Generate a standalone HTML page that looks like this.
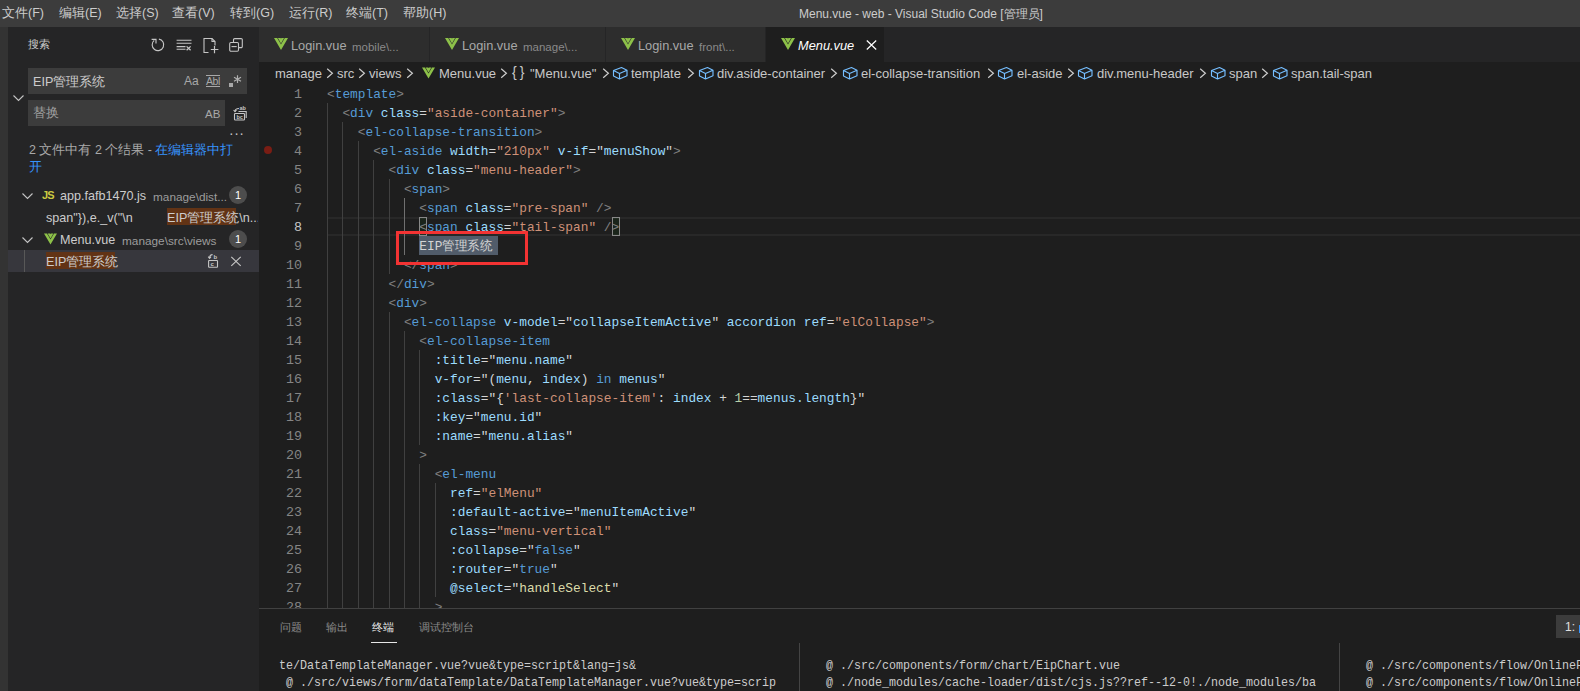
<!DOCTYPE html>
<html><head><meta charset="utf-8">
<style>
*{margin:0;padding:0;box-sizing:border-box}
html,body{width:1580px;height:691px;overflow:hidden;background:#1e1e1e;font-family:"Liberation Sans",sans-serif;color:#cccccc}
.a{position:absolute;white-space:nowrap}
#title{position:absolute;left:0;top:0;width:1580px;height:27px;background:#3c3c3c}
#title .m{position:absolute;top:5px;font-size:12.5px;color:#cccccc;line-height:16px}
#act{position:absolute;left:0;top:27px;width:8px;height:664px;background:#333333}
#side{position:absolute;left:8px;top:27px;width:251px;height:664px;background:#252526;overflow:hidden}
#tabs{position:absolute;left:259px;top:27px;width:1321px;height:35px;background:#252526}
.tab{position:absolute;top:0;height:35px;background:#2d2d2d;border-right:1px solid #252526}
.tab.act{background:#1e1e1e}
.tl{position:absolute;top:11px;font-size:12.8px;line-height:16px;color:#a8a8a8}
.td{position:absolute;top:12px;font-size:11.5px;line-height:16px;color:#8a8a8a}
#crumb{position:absolute;left:259px;top:62px;width:1321px;height:22px;background:#1e1e1e}
.cb{position:absolute;top:4px;font-size:13px;line-height:16px;color:#c8c8c8}
#code{position:absolute;left:259px;top:84px;width:1321px;height:524px;overflow:hidden}
.ln{position:absolute;left:0;margin-top:1px;width:43px;text-align:right;font-family:"Liberation Mono",monospace;font-size:13.333px;line-height:19px;color:#858585}
.cl{position:absolute;left:68px;margin-top:1px;font-family:"Liberation Mono",monospace;font-size:13.333px;line-height:19px;color:#d4d4d4;white-space:pre;transform:scaleX(0.96125);transform-origin:0 0}
.t{color:#569cd6}.p{color:#808080}.n{color:#9cdcfe}.s{color:#ce9178}.f{color:#dcdcaa}.num{color:#b5cea8}
#panel{position:absolute;left:259px;top:608px;width:1321px;height:83px;background:#1e1e1e;border-top:1px solid #414141}
.pt{position:absolute;top:11px;font-size:11px;line-height:14px;color:#8b8b8b}
.term{position:absolute;margin-top:1px;font-family:"Liberation Mono",monospace;font-size:13.333px;transform:scaleX(0.875);transform-origin:0 0;line-height:17px;color:#cccccc;white-space:pre}
</style></head><body>
<div id="title">
  <span class="m" style="left:2px">文件(F)</span>
  <span class="m" style="left:59px">编辑(E)</span>
  <span class="m" style="left:116px">选择(S)</span>
  <span class="m" style="left:172px">查看(V)</span>
  <span class="m" style="left:230px">转到(G)</span>
  <span class="m" style="left:289px">运行(R)</span>
  <span class="m" style="left:346px">终端(T)</span>
  <span class="m" style="left:403px">帮助(H)</span>
  <span class="m" style="left:799px;font-size:12px;top:6px">Menu.vue - web - Visual Studio Code [管理员]</span>
</div>
<div id="act"></div>
<div id="side">
<span class="a" style="left:20px;top:10px;font-size:11px;line-height:15px;color:#cccccc">搜索</span>
<svg class="a" style="left:141px;top:9px" width="18" height="18" viewBox="0 0 18 18" fill="none" stroke="#c5c5c5" stroke-width="1.15"><path d="M9.9 3.1A5.8 5.8 0 1 1 5.2 4.4"/><path d="M2.6 3.4H7V7.4"/></svg>
<svg class="a" style="left:167px;top:9px" width="18" height="18" viewBox="0 0 18 18" fill="none" stroke="#c5c5c5" stroke-width="1.1"><path d="M1.6 4.3H16.5M1.6 7.3H16.5M1.6 10.6H10.5M1.6 13.3H10.5"/><path d="M11.6 10.4L15.6 14.2M15.6 10.4L11.6 14.2" stroke-width="1.3"/></svg>
<svg class="a" style="left:194px;top:9px" width="18" height="18" viewBox="0 0 18 18" fill="none" stroke="#c5c5c5" stroke-width="1.1"><path d="M6.5 16.5H2V2.5H10L13 5.5V9.5"/><path d="M10 2.5V5.5H13"/><path d="M12.5 10V17.2M8.8 13.5H16.4" stroke-width="1.2"/></svg>
<svg class="a" style="left:220px;top:9px" width="16" height="18" viewBox="0 0 16 18" fill="none" stroke="#c5c5c5" stroke-width="1.1"><path d="M5.5 6.5V3.8A1.2 1.2 0 0 1 6.7 2.6H13.1A1.2 1.2 0 0 1 14.3 3.8V10.4A1.2 1.2 0 0 1 13.1 11.6H10.5"/><rect x="1.7" y="6.5" width="8.8" height="8.8" rx="1.2"/><path d="M3.5 10.6H8.7"/></svg>
<div class="a" style="left:20px;top:41px;width:219px;height:26px;background:#3c3c3c"></div>
<span class="a" style="left:25px;top:47px;font-size:12.6px;line-height:16px;color:#cccccc">EIP管理系统</span>
<span class="a" style="left:176px;top:47px;font-size:12px;line-height:14px;color:#a8a8a8">Aa</span>
<div class="a" style="left:198px;top:48px;width:14px;height:1px;background:#a8a8a8"></div><div class="a" style="left:198px;top:59px;width:14px;height:1px;background:#a8a8a8"></div><span class="a" style="left:198px;top:49px;font-size:10.5px;line-height:10px;color:#a8a8a8;letter-spacing:-0.4px">Abl</span>
<div class="a" style="left:221px;top:56px;width:4px;height:4px;background:#a8a8a8"></div>
<svg class="a" style="left:225px;top:48px" width="9" height="9" viewBox="0 0 9 9" stroke="#b0b0b0" stroke-width="1.2" fill="none"><path d="M4.5 0.3V8.1M1 2.3L8 6.2M8 2.3L1 6.2"/></svg>
<svg class="a" style="left:5px;top:67px" width="11" height="8" viewBox="0 0 11 8" fill="none" stroke="#c5c5c5" stroke-width="1.1"><path d="M0.5 1.5L5.5 6.5L10.5 1.5"/></svg>
<div class="a" style="left:20px;top:73px;width:197px;height:26px;background:#3c3c3c"></div>
<span class="a" style="left:25px;top:78px;font-size:13px;line-height:16px;color:#a0a0a0">替换</span>
<span class="a" style="left:197px;top:80px;font-size:11.5px;line-height:14px;color:#a8a8a8">AB</span>
<svg class="a" style="left:224px;top:75px" width="17" height="19" viewBox="0 0 17 19" fill="none" stroke="#c5c5c5" stroke-width="1.1"><rect x="2.5" y="11.5" width="10" height="6.5" rx="0.8"/><path d="M6.5 9.5H14.2V16"/><path d="M3 9.5C3 7.5 4.5 6.5 7 6.5" /><path d="M1.6 8L3 9.7L4.5 8"/><text x="7.5" y="8" font-size="5.5" fill="#c5c5c5" stroke="none" font-family="Liberation Sans" font-weight="bold">ab</text><text x="4.5" y="16.6" font-size="5.5" fill="#c5c5c5" stroke="none" font-family="Liberation Sans" font-weight="bold">bc</text></svg>
<span class="a" style="left:221px;top:99px;font-size:14px;line-height:14px;color:#c5c5c5;letter-spacing:0.5px">&middot;&middot;&middot;</span>
<div class="a" style="left:21px;top:115px;width:222px;font-size:12.5px;line-height:17px;color:#a9a9a9;white-space:normal">2 文件中有 2 个结果 - <span style="color:#3794ff">在编辑器中打<br>开</span></div>
<svg class="a" style="left:14px;top:165px" width="11" height="8" viewBox="0 0 11 8" fill="none" stroke="#c5c5c5" stroke-width="1.1"><path d="M0.5 1.5L5.5 6.5L10.5 1.5"/></svg>
<span class="a" style="left:34px;top:162px;font-size:11px;line-height:12px;font-weight:bold;color:#cbcb41;letter-spacing:-0.8px">JS</span>
<span class="a" style="left:52px;top:161px;font-size:12.6px;line-height:16px;color:#cccccc">app.fafb1470.js</span>
<span class="a" style="left:145px;top:162px;font-size:11.8px;line-height:16px;color:#9d9d9d">manage\dist...</span>
<div class="a" style="left:221px;top:159px;width:18px;height:18px;border-radius:50%;background:#4d4d4d;color:#ffffff;font-size:11px;line-height:18px;text-align:center">1</div>
<span class="a" style="left:38px;top:183px;font-size:12.6px;line-height:16px;color:#cccccc">span&quot;}),e._v(&quot;\n</span>
<div class="a" style="left:159px;top:181px;width:69px;height:17px;background:#623315"></div>
<span class="a" style="left:159px;top:183px;width:91px;overflow:hidden;font-size:12.6px;line-height:16px;color:#cccccc">EIP管理系统\n...</span>
<svg class="a" style="left:14px;top:209px" width="11" height="8" viewBox="0 0 11 8" fill="none" stroke="#c5c5c5" stroke-width="1.1"><path d="M0.5 1.5L5.5 6.5L10.5 1.5"/></svg>
<svg class="a" style="left:36px;top:206px" width="13" height="12" viewBox="0 0 14 12"><path d="M0 0H3.2L7 6.5L10.8 0H14L7 12Z M3.9 0H6.6L7 0.8L7.4 0H10.1L7 5.4Z" fill="#8dc149"/></svg>
<span class="a" style="left:52px;top:205px;font-size:12.6px;line-height:16px;color:#cccccc">Menu.vue</span>
<span class="a" style="left:114px;top:206px;font-size:11.8px;line-height:16px;color:#9d9d9d">manage\src\views</span>
<div class="a" style="left:221px;top:203px;width:18px;height:18px;border-radius:50%;background:#4d4d4d;color:#ffffff;font-size:11px;line-height:18px;text-align:center">1</div>
<div class="a" style="left:0;top:223px;width:251px;height:22px;background:#37373d"></div>
<div class="a" style="left:16px;top:223px;width:1px;height:22px;background:#585858"></div>
<div class="a" style="left:38px;top:225px;width:69px;height:17px;background:#623315"></div>
<span class="a" style="left:38px;top:227px;font-size:12.6px;line-height:16px;color:#cccccc">EIP管理系统</span>
<svg class="a" style="left:198px;top:224px" width="14" height="18" viewBox="0 0 14 18" fill="none" stroke="#c5c5c5" stroke-width="1.1"><rect x="2.6" y="9.5" width="8.9" height="6.8" rx="0.5"/><path d="M3.6 7C3.6 4.6 4.6 3.6 6.6 3.6"/><path d="M2.2 5.6L3.6 7.4L5 5.6"/><text x="7.6" y="7.6" font-size="6" fill="#c5c5c5" stroke="none" font-family="Liberation Sans" font-weight="bold">b</text><text x="4.4" y="15" font-size="6" fill="#c5c5c5" stroke="none" font-family="Liberation Sans" font-weight="bold">c</text></svg>
<svg class="a" style="left:222px;top:229px" width="12" height="11" viewBox="0 0 12 11" fill="none" stroke="#c5c5c5" stroke-width="1.15"><path d="M1.3 0.9L10.7 9.9M10.7 0.9L1.3 9.9"/></svg>
</div>
<div id="tabs">
 <div class="tab" style="left:0;width:171px"><svg class="a" style="left:15px;top:11px" width="14" height="12" viewBox="0 0 14 12"><path d="M0 0H3.2L7 6.5L10.8 0H14L7 12Z M3.9 0H6.6L7 0.8L7.4 0H10.1L7 5.4Z" fill="#8dc149"/></svg><span class="tl" style="left:32px">Login.vue</span><span class="td" style="left:93px">mobile\...</span></div>
 <div class="tab" style="left:171px;width:176px"><svg class="a" style="left:15px;top:11px" width="14" height="12" viewBox="0 0 14 12"><path d="M0 0H3.2L7 6.5L10.8 0H14L7 12Z M3.9 0H6.6L7 0.8L7.4 0H10.1L7 5.4Z" fill="#8dc149"/></svg><span class="tl" style="left:32px">Login.vue</span><span class="td" style="left:93px">manage\...</span></div>
 <div class="tab" style="left:347px;width:160px"><svg class="a" style="left:15px;top:11px" width="14" height="12" viewBox="0 0 14 12"><path d="M0 0H3.2L7 6.5L10.8 0H14L7 12Z M3.9 0H6.6L7 0.8L7.4 0H10.1L7 5.4Z" fill="#8dc149"/></svg><span class="tl" style="left:32px">Login.vue</span><span class="td" style="left:93px">front\...</span></div>
 <div class="tab act" style="left:507px;width:119px"><svg class="a" style="left:15px;top:11px" width="14" height="12" viewBox="0 0 14 12"><path d="M0 0H3.2L7 6.5L10.8 0H14L7 12Z M3.9 0H6.6L7 0.8L7.4 0H10.1L7 5.4Z" fill="#8dc149"/></svg><span class="tl" style="left:32px;color:#ffffff;font-style:italic">Menu.vue</span><svg class="a" style="left:100px;top:13px" width="11" height="10" viewBox="0 0 11 10" fill="none" stroke="#ffffff" stroke-width="1.2"><path d="M0.8 0.5L10.2 9.5M10.2 0.5L0.8 9.5"/></svg></div>
</div>
<div id="crumb"><span class="cb" style="left:16px">manage</span><svg class="a" style="left:67px;top:5.5px" width="8" height="11" viewBox="0 0 8 11" fill="none" stroke="#cccccc" stroke-width="1.2"><path d="M1.2 0.8L6.4 5.3L1.2 9.8"/></svg><span class="cb" style="left:78px">src</span><svg class="a" style="left:99px;top:5.5px" width="8" height="11" viewBox="0 0 8 11" fill="none" stroke="#cccccc" stroke-width="1.2"><path d="M1.2 0.8L6.4 5.3L1.2 9.8"/></svg><span class="cb" style="left:110px">views</span><svg class="a" style="left:147px;top:5.5px" width="8" height="11" viewBox="0 0 8 11" fill="none" stroke="#cccccc" stroke-width="1.2"><path d="M1.2 0.8L6.4 5.3L1.2 9.8"/></svg><svg class="a" style="left:163px;top:5px" width="13" height="12" viewBox="0 0 14 12"><path d="M0 0H3.2L7 6.5L10.8 0H14L7 12Z M3.9 0H6.6L7 0.8L7.4 0H10.1L7 5.4Z" fill="#8dc149"/></svg><span class="cb" style="left:180px">Menu.vue</span><svg class="a" style="left:241px;top:5.5px" width="8" height="11" viewBox="0 0 8 11" fill="none" stroke="#cccccc" stroke-width="1.2"><path d="M1.2 0.8L6.4 5.3L1.2 9.8"/></svg><span class="cb" style="left:253px;top:2px;font-size:14px;letter-spacing:3px">{}</span><span class="cb" style="left:271px">&quot;Menu.vue&quot;</span><svg class="a" style="left:343px;top:5.5px" width="8" height="11" viewBox="0 0 8 11" fill="none" stroke="#cccccc" stroke-width="1.2"><path d="M1.2 0.8L6.4 5.3L1.2 9.8"/></svg><svg class="a" style="left:352px;top:3px" width="17" height="16" viewBox="0 0 17 16"><path d="M10.5 2.5L2.5 5.5V11L8.5 14L16 10.8V5.3Z M2.5 5.5L8.5 8.5L16 5.3 M8.5 8.5V14" fill="none" stroke="#75beff" stroke-width="1.15" stroke-linejoin="round"/></svg><span class="cb" style="left:372px">template</span><svg class="a" style="left:428px;top:5.5px" width="8" height="11" viewBox="0 0 8 11" fill="none" stroke="#cccccc" stroke-width="1.2"><path d="M1.2 0.8L6.4 5.3L1.2 9.8"/></svg><svg class="a" style="left:438px;top:3px" width="17" height="16" viewBox="0 0 17 16"><path d="M10.5 2.5L2.5 5.5V11L8.5 14L16 10.8V5.3Z M2.5 5.5L8.5 8.5L16 5.3 M8.5 8.5V14" fill="none" stroke="#75beff" stroke-width="1.15" stroke-linejoin="round"/></svg><span class="cb" style="left:458px">div.aside-container</span><svg class="a" style="left:571px;top:5.5px" width="8" height="11" viewBox="0 0 8 11" fill="none" stroke="#cccccc" stroke-width="1.2"><path d="M1.2 0.8L6.4 5.3L1.2 9.8"/></svg><svg class="a" style="left:582px;top:3px" width="17" height="16" viewBox="0 0 17 16"><path d="M10.5 2.5L2.5 5.5V11L8.5 14L16 10.8V5.3Z M2.5 5.5L8.5 8.5L16 5.3 M8.5 8.5V14" fill="none" stroke="#75beff" stroke-width="1.15" stroke-linejoin="round"/></svg><span class="cb" style="left:602px">el-collapse-transition</span><svg class="a" style="left:728px;top:5.5px" width="8" height="11" viewBox="0 0 8 11" fill="none" stroke="#cccccc" stroke-width="1.2"><path d="M1.2 0.8L6.4 5.3L1.2 9.8"/></svg><svg class="a" style="left:737px;top:3px" width="17" height="16" viewBox="0 0 17 16"><path d="M10.5 2.5L2.5 5.5V11L8.5 14L16 10.8V5.3Z M2.5 5.5L8.5 8.5L16 5.3 M8.5 8.5V14" fill="none" stroke="#75beff" stroke-width="1.15" stroke-linejoin="round"/></svg><span class="cb" style="left:758px">el-aside</span><svg class="a" style="left:808px;top:5.5px" width="8" height="11" viewBox="0 0 8 11" fill="none" stroke="#cccccc" stroke-width="1.2"><path d="M1.2 0.8L6.4 5.3L1.2 9.8"/></svg><svg class="a" style="left:817px;top:3px" width="17" height="16" viewBox="0 0 17 16"><path d="M10.5 2.5L2.5 5.5V11L8.5 14L16 10.8V5.3Z M2.5 5.5L8.5 8.5L16 5.3 M8.5 8.5V14" fill="none" stroke="#75beff" stroke-width="1.15" stroke-linejoin="round"/></svg><span class="cb" style="left:838px">div.menu-header</span><svg class="a" style="left:940px;top:5.5px" width="8" height="11" viewBox="0 0 8 11" fill="none" stroke="#cccccc" stroke-width="1.2"><path d="M1.2 0.8L6.4 5.3L1.2 9.8"/></svg><svg class="a" style="left:950px;top:3px" width="17" height="16" viewBox="0 0 17 16"><path d="M10.5 2.5L2.5 5.5V11L8.5 14L16 10.8V5.3Z M2.5 5.5L8.5 8.5L16 5.3 M8.5 8.5V14" fill="none" stroke="#75beff" stroke-width="1.15" stroke-linejoin="round"/></svg><span class="cb" style="left:970px">span</span><svg class="a" style="left:1002px;top:5.5px" width="8" height="11" viewBox="0 0 8 11" fill="none" stroke="#cccccc" stroke-width="1.2"><path d="M1.2 0.8L6.4 5.3L1.2 9.8"/></svg><svg class="a" style="left:1012px;top:3px" width="17" height="16" viewBox="0 0 17 16"><path d="M10.5 2.5L2.5 5.5V11L8.5 14L16 10.8V5.3Z M2.5 5.5L8.5 8.5L16 5.3 M8.5 8.5V14" fill="none" stroke="#75beff" stroke-width="1.15" stroke-linejoin="round"/></svg><span class="cb" style="left:1032px">span.tail-span</span></div>
<div id="code">
<div class="a" style="left:69px;top:133px;width:1252px;height:19px;border-top:2px solid #282828;border-bottom:2px solid #282828"></div>
<div class="a" style="left:68px;top:19px;width:1px;height:513px;background:#404040"></div>
<div class="a" style="left:83px;top:38px;width:1px;height:494px;background:#404040"></div>
<div class="a" style="left:99px;top:57px;width:1px;height:475px;background:#404040"></div>
<div class="a" style="left:114px;top:76px;width:1px;height:456px;background:#404040"></div>
<div class="a" style="left:130px;top:95px;width:1px;height:95px;background:#404040"></div>
<div class="a" style="left:130px;top:228px;width:1px;height:304px;background:#404040"></div>
<div class="a" style="left:145px;top:114px;width:1px;height:57px;background:#707070"></div>
<div class="a" style="left:145px;top:247px;width:1px;height:285px;background:#404040"></div>
<div class="a" style="left:160px;top:266px;width:1px;height:95px;background:#404040"></div>
<div class="a" style="left:160px;top:380px;width:1px;height:152px;background:#404040"></div>
<div class="a" style="left:176px;top:399px;width:1px;height:114px;background:#404040"></div>
<div class="a" style="left:160px;top:133px;width:8px;height:19px;border:1px solid #888888;background:rgba(0,100,0,0.1)"></div>
<div class="a" style="left:353px;top:133px;width:8px;height:19px;border:1px solid #888888;background:rgba(0,100,0,0.1)"></div>
<div class="a" style="left:160px;top:152px;width:79px;height:19px;background:#515c6a"></div>
<div class="a" style="left:5px;top:62px;width:8px;height:8px;border-radius:50%;background:#7a1d14"></div>
<div class="ln" style="top:0px">1</div>
<div class="cl" style="top:0px"><span class="p">&lt;</span><span class="t">template</span><span class="p">&gt;</span></div>
<div class="ln" style="top:19px">2</div>
<div class="cl" style="top:19px">  <span class="p">&lt;</span><span class="t">div</span> <span class="n">class</span>=<span class="s">&quot;aside-container&quot;</span><span class="p">&gt;</span></div>
<div class="ln" style="top:38px">3</div>
<div class="cl" style="top:38px">    <span class="p">&lt;</span><span class="t">el-collapse-transition</span><span class="p">&gt;</span></div>
<div class="ln" style="top:57px">4</div>
<div class="cl" style="top:57px">      <span class="p">&lt;</span><span class="t">el-aside</span> <span class="n">width</span>=<span class="s">&quot;210px&quot;</span> <span class="n">v-if</span>=&quot;<span class="n">menuShow</span>&quot;<span class="p">&gt;</span></div>
<div class="ln" style="top:76px">5</div>
<div class="cl" style="top:76px">        <span class="p">&lt;</span><span class="t">div</span> <span class="n">class</span>=<span class="s">&quot;menu-header&quot;</span><span class="p">&gt;</span></div>
<div class="ln" style="top:95px">6</div>
<div class="cl" style="top:95px">          <span class="p">&lt;</span><span class="t">span</span><span class="p">&gt;</span></div>
<div class="ln" style="top:114px">7</div>
<div class="cl" style="top:114px">            <span class="p">&lt;</span><span class="t">span</span> <span class="n">class</span>=<span class="s">&quot;pre-span&quot;</span> <span class="p">/&gt;</span></div>
<div class="ln" style="top:133px;color:#c6c6c6">8</div>
<div class="cl" style="top:133px">            <span class="p">&lt;</span><span class="t">span</span> <span class="n">class</span>=<span class="s">&quot;tail-span&quot;</span> <span class="p">/&gt;</span></div>
<div class="ln" style="top:152px">9</div>
<div class="cl" style="top:152px">            EIP管理系统</div>
<div class="ln" style="top:171px">10</div>
<div class="cl" style="top:171px">          <span class="p">&lt;/</span><span class="t">span</span><span class="p">&gt;</span></div>
<div class="ln" style="top:190px">11</div>
<div class="cl" style="top:190px">        <span class="p">&lt;/</span><span class="t">div</span><span class="p">&gt;</span></div>
<div class="ln" style="top:209px">12</div>
<div class="cl" style="top:209px">        <span class="p">&lt;</span><span class="t">div</span><span class="p">&gt;</span></div>
<div class="ln" style="top:228px">13</div>
<div class="cl" style="top:228px">          <span class="p">&lt;</span><span class="t">el-collapse</span> <span class="n">v-model</span>=&quot;<span class="n">collapseItemActive</span>&quot; <span class="n">accordion</span> <span class="n">ref</span>=<span class="s">&quot;elCollapse&quot;</span><span class="p">&gt;</span></div>
<div class="ln" style="top:247px">14</div>
<div class="cl" style="top:247px">            <span class="p">&lt;</span><span class="t">el-collapse-item</span></div>
<div class="ln" style="top:266px">15</div>
<div class="cl" style="top:266px">              <span class="n">:title</span>=&quot;<span class="n">menu.name</span>&quot;</div>
<div class="ln" style="top:285px">16</div>
<div class="cl" style="top:285px">              <span class="n">v-for</span>=&quot;(<span class="n">menu</span>, <span class="n">index</span>) <span class="t">in</span> <span class="n">menus</span>&quot;</div>
<div class="ln" style="top:304px">17</div>
<div class="cl" style="top:304px">              <span class="n">:class</span>=&quot;{<span class="s">&#x27;last-collapse-item&#x27;</span>: <span class="n">index</span> + <span class="num">1</span>==<span class="n">menus.length</span>}&quot;</div>
<div class="ln" style="top:323px">18</div>
<div class="cl" style="top:323px">              <span class="n">:key</span>=&quot;<span class="n">menu.id</span>&quot;</div>
<div class="ln" style="top:342px">19</div>
<div class="cl" style="top:342px">              <span class="n">:name</span>=&quot;<span class="n">menu.alias</span>&quot;</div>
<div class="ln" style="top:361px">20</div>
<div class="cl" style="top:361px">            <span class="p">&gt;</span></div>
<div class="ln" style="top:380px">21</div>
<div class="cl" style="top:380px">              <span class="p">&lt;</span><span class="t">el-menu</span></div>
<div class="ln" style="top:399px">22</div>
<div class="cl" style="top:399px">                <span class="n">ref</span>=<span class="s">&quot;elMenu&quot;</span></div>
<div class="ln" style="top:418px">23</div>
<div class="cl" style="top:418px">                <span class="n">:default-active</span>=&quot;<span class="n">menuItemActive</span>&quot;</div>
<div class="ln" style="top:437px">24</div>
<div class="cl" style="top:437px">                <span class="n">class</span>=<span class="s">&quot;menu-vertical&quot;</span></div>
<div class="ln" style="top:456px">25</div>
<div class="cl" style="top:456px">                <span class="n">:collapse</span>=&quot;<span class="t">false</span>&quot;</div>
<div class="ln" style="top:475px">26</div>
<div class="cl" style="top:475px">                <span class="n">:router</span>=&quot;<span class="t">true</span>&quot;</div>
<div class="ln" style="top:494px">27</div>
<div class="cl" style="top:494px">                <span class="n">@select</span>=&quot;<span class="f">handleSelect</span>&quot;</div>
<div class="ln" style="top:513px">28</div>
<div class="cl" style="top:513px">              <span class="p">&gt;</span></div>
<div class="a" style="left:137px;top:147px;width:132px;height:34px;border:3px solid #f33333"></div>
</div>
<div id="panel">
<span class="pt" style="left:21px">问题</span>
<span class="pt" style="left:67px">输出</span>
<span class="pt" style="left:113px;color:#e7e7e7">终端</span>
<div class="a" style="left:112px;top:33px;width:26px;height:1px;background:#e7e7e7"></div>
<span class="pt" style="left:160px">调试控制台</span>
<div class="a" style="left:1297px;top:6px;width:24px;height:23px;background:#3c3c3c"></div>
<span class="a" style="left:1306px;top:11px;font-size:12px;line-height:14px;color:#e0e0e0">1:</span><div class="a" style="left:1320px;top:16px;width:2px;height:8px;background:#3794ff"></div>
<div class="a" style="left:540px;top:34px;width:1px;height:49px;background:#444444"></div>
<div class="a" style="left:1080px;top:34px;width:1px;height:49px;background:#444444"></div>
<div class="term" style="left:20px;top:47px">te/DataTemplateManager.vue?vue&amp;type=script&amp;lang=js&amp;
 @ ./src/views/form/dataTemplate/DataTemplateManager.vue?vue&amp;type=scrip</div>
<div class="term" style="left:560px;top:47px"> @ ./src/components/form/chart/EipChart.vue
 @ ./node_modules/cache-loader/dist/cjs.js??ref--12-0!./node_modules/ba</div>
<div class="term" style="left:1100px;top:47px"> @ ./src/components/flow/OnlineForm.vue
 @ ./src/components/flow/OnlineForm.vue</div>
</div>
</body></html>
